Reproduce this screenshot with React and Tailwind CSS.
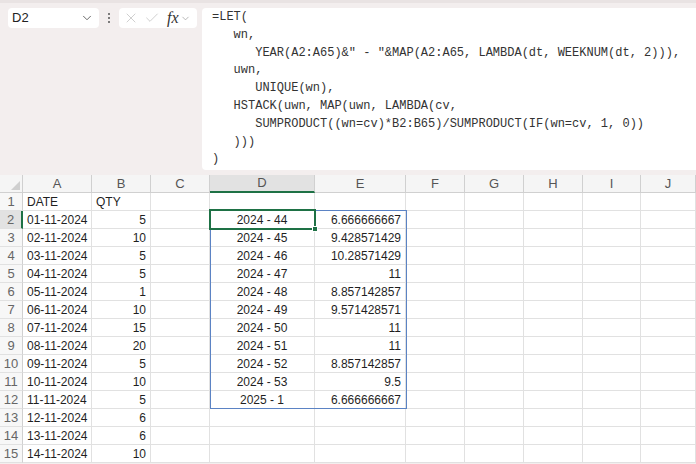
import { ChevronDown, X, Check } from 'lucide-react'

const cols = ['A', 'B', 'C', 'D', 'E', 'F', 'G', 'H', 'I', 'J']

const dates = [
  '01-11-2024', '02-11-2024', '03-11-2024', '04-11-2024', '05-11-2024', '06-11-2024', '07-11-2024',
  '08-11-2024', '09-11-2024', '10-11-2024', '11-11-2024', '12-11-2024', '13-11-2024', '14-11-2024',
]
const qty = [5, 10, 5, 5, 1, 10, 15, 20, 5, 10, 5, 6, 6, 10]
const weeks = [
  ['2024 - 44', '6.666666667'],
  ['2024 - 45', '9.428571429'],
  ['2024 - 46', '10.28571429'],
  ['2024 - 47', '11'],
  ['2024 - 48', '8.857142857'],
  ['2024 - 49', '9.571428571'],
  ['2024 - 50', '11'],
  ['2024 - 51', '11'],
  ['2024 - 52', '8.857142857'],
  ['2024 - 53', '9.5'],
  ['2025 - 1', '6.666666667'],
]

const formula = [
  '=LET(',
  '   wn,',
  '      YEAR(A2:A65)&" - "&MAP(A2:A65, LAMBDA(dt, WEEKNUM(dt, 2))),',
  '   uwn,',
  '      UNIQUE(wn),',
  '   HSTACK(uwn, MAP(uwn, LAMBDA(cv,',
  '      SUMPRODUCT((wn=cv)*B2:B65)/SUMPRODUCT(IF(wn=cv, 1, 0))',
  '   )))',
  ')',
]

function Cell({ children, align = 'left' }) {
  const a = align === 'right' ? 'justify-end pr-[4px]' : align === 'center' ? 'justify-center' : 'justify-start pl-[4px]'
  return (
    <div className={`flex items-center ${a} border-r border-b border-[#e1e1e1] bg-white text-[12px] text-[#1f1f1f] whitespace-nowrap overflow-hidden`}>
      {children}
    </div>
  )
}

function rowData(r) {
  if (r === 1) return ['DATE', 'QTY']
  return [dates[r - 2], qty[r - 2]]
}

export default function App() {
  const rows = Array.from({ length: 15 }, (_, i) => i + 1)

  return (
    <div className="w-[696px] h-[464px] overflow-hidden bg-[#f3eeee] font-['Liberation_Sans',Arial,sans-serif]">
      {/* Top bar */}
      <div className="h-[175px] flex items-start pt-[5px] pl-[8px] border-t-[3px] border-[#e9e3e3]">
        <div className="w-[91px] h-[20px] bg-white rounded-[4px] flex items-center justify-between pl-[4px] pr-[5px] text-[13px] text-[#222]">
          <span>D2</span>
          <ChevronDown className="w-[14px] h-[14px] text-[#555]" strokeWidth={1.5} />
        </div>
        <div className="w-[12px] h-[20px] ml-[4px] flex flex-col items-center justify-center gap-[2px]">
          <span className="w-[2px] h-[2px] bg-[#555] rounded-full" />
          <span className="w-[2px] h-[2px] bg-[#555] rounded-full" />
          <span className="w-[2px] h-[2px] bg-[#555] rounded-full" />
        </div>
        <div className="w-[78px] h-[20px] ml-[4px] bg-white rounded-[4px] flex items-center pl-[4px] gap-[5px] text-[#bdbdbd]">
          <X className="w-[16px] h-[16px]" strokeWidth={1.1} />
          <Check className="w-[16px] h-[16px]" strokeWidth={1.1} />
          <span className="flex items-center text-[#333] font-['Liberation_Serif',serif] italic text-[16px] leading-none ml-[2px]">
            fx
            <ChevronDown className="w-[11px] h-[11px] text-[#999] ml-[1px]" strokeWidth={1.5} />
          </span>
        </div>
        <div className="flex-1 h-[162px] ml-[5px] bg-white rounded-tl-[4px] rounded-bl-[4px] pl-[10px] pt-[1px] font-['Liberation_Mono',monospace] text-[12px] leading-[17.8px] text-[#333] whitespace-pre">
          {formula.map((l, i) => (
            <div key={i}>{l}</div>
          ))}
        </div>
      </div>

      {/* Grid */}
      <div className="relative bg-white">
        <div className="grid grid-cols-[23px_69px_59px_59px_105px_91px_59px_59px_59px_58px_1fr] auto-rows-[18px]">
          {/* header row */}
          <div className="relative bg-[#f5f5f5] border-r border-b border-[#d0d0d0]">
            <div className="absolute right-[2px] bottom-[2px] w-0 h-0 border-l-[9px] border-l-transparent border-b-[9px] border-b-[#cfcfcf]" />
          </div>
          {cols.map(c => (
            <div
              key={c}
              className={`flex items-center justify-center text-[13px] text-[#555] border-r ${
                c === 'D' ? 'bg-[#e2e2e2] border-b-2 border-b-[#1e7145] border-r-[#d0d0d0]' : 'bg-[#f5f5f5] border-b border-[#d0d0d0]'
              }`}
            >
              {c}
            </div>
          ))}

          {rows.map(r => {
            const [a, b] = rowData(r)
            const w = r >= 2 && r <= 12 ? weeks[r - 2] : null
            return [
              <div
                key={`h${r}`}
                className={`flex items-center justify-center text-[13px] text-[#666] border-b border-[#e1e1e1] ${
                  r === 2 ? 'bg-[#e2e2e2] border-r-2 border-r-[#1e7145]' : 'bg-[#f7f7f7] border-r border-r-[#d0d0d0]'
                }`}
              >
                {r}
              </div>,
              <Cell key={`a${r}`}>{a}</Cell>,
              <Cell key={`b${r}`} align={r === 1 ? 'left' : 'right'}>{b}</Cell>,
              <Cell key={`c${r}`} />,
              <Cell key={`d${r}`} align="center">{w ? w[0] : ''}</Cell>,
              <Cell key={`e${r}`} align="right">{w ? w[1] : ''}</Cell>,
              <Cell key={`f${r}`} />,
              <Cell key={`g${r}`} />,
              <Cell key={`h2${r}`} />,
              <Cell key={`i${r}`} />,
              <Cell key={`j${r}`} />,
            ]
          })}
        </div>

        {/* spill range outline D2:E12 */}
        <div className="absolute left-[210px] top-[35px] w-[197px] h-[199px] border border-[#5b83c4] pointer-events-none" />
        {/* active cell D2 */}
        <div className="absolute left-[209px] top-[34px] w-[107px] h-[21px] border-2 border-[#1e7145] pointer-events-none">
          <div className="absolute -right-[4px] -bottom-[4px] w-[6px] h-[6px] bg-[#1e7145] border border-white" />
        </div>
      </div>
    </div>
  )
}
